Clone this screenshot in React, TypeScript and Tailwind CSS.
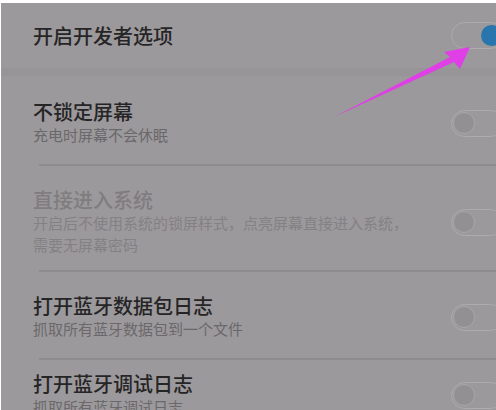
import React from "react";

const font = { fontFamily: '"Noto Sans CJK SC", "Noto Sans", sans-serif' };

function Toggle({ on = false }: { on?: boolean }) {
  return (
    <div className="relative -mr-[8px] flex h-[27px] w-[53px] shrink-0 items-center rounded-full border border-[#aeabae] px-[1px]">
      <div
        className={
          on
            ? "ml-auto h-[21px] w-[21px] rounded-full bg-[#2876ad]"
            : "h-[22px] w-[22px] rounded-full border border-[#a9a6a9] bg-[#939093]"
        }
      />
    </div>
  );
}

interface Row {
  title: string;
  sub: string[];
  disabled?: boolean;
  pt: string;
  pb: string;
  line: boolean;
}

const rows: Row[] = [
  { title: "不锁定屏幕", sub: ["充电时屏幕不会休眠"], pt: "pt-[24px]", pb: "pb-[18px]", line: true },
  {
    title: "直接进入系统",
    sub: ["开启后不使用系统的锁屏样式，点亮屏幕直接进入系统，", "需要无屏幕密码"],
    disabled: true,
    pt: "pt-[22px]",
    pb: "pb-[14px]",
    line: true,
  },
  { title: "打开蓝牙数据包日志", sub: ["抓取所有蓝牙数据包到一个文件"], pt: "pt-[22px]", pb: "pb-[18px]", line: true },
  { title: "打开蓝牙调试日志", sub: ["抓取所有蓝牙调试日志"], pt: "pt-[12px]", pb: "pb-[14px]", line: false },
];

export default function App() {
  return (
    <div
      className="relative h-[410px] w-[496px] overflow-hidden border-l border-t-[3px] border-white bg-[#9c999c]"
      style={font}
    >
      <div className="flex h-[65px] items-center pl-8">
        <span className="flex-1 text-[20px] font-medium leading-[26px] text-[#262526]">开启开发者选项</span>
        <Toggle on />
      </div>
      <div className="h-[8px] bg-[#989598]" />
      <div>
        {rows.map((r) => (
          <div key={r.title} className="pl-8">
            <div className={`flex items-center ${r.pt} ${r.pb}`}>
              <div className="flex-1">
                <div
                  className={`text-[20px] font-medium leading-[24px] ${r.disabled ? "text-[#7f7d7f]" : "text-[#262526]"}`}
                >
                  {r.title}
                </div>
                {r.sub.map((s) => (
                  <div
                    key={s}
                    className={`text-[15px] leading-[22px] ${r.disabled ? "text-[#838183]" : "text-[#6a686a]"}`}
                  >
                    {s}
                  </div>
                ))}
              </div>
              <Toggle />
            </div>
            {r.line && <div className="ml-[6px] h-[2px] border-t border-b border-[#8f8c8f] bg-[#a3a0a3]" />}
          </div>
        ))}
      </div>
      <svg className="absolute left-0 top-0" width="496" height="410" viewBox="0 -3 496 410">
        <polygon
          points="333,111 449,51 443,46 469,41 459,63 453,56"
          fill="#e03ee6"
        />
      </svg>
    </div>
  );
}
